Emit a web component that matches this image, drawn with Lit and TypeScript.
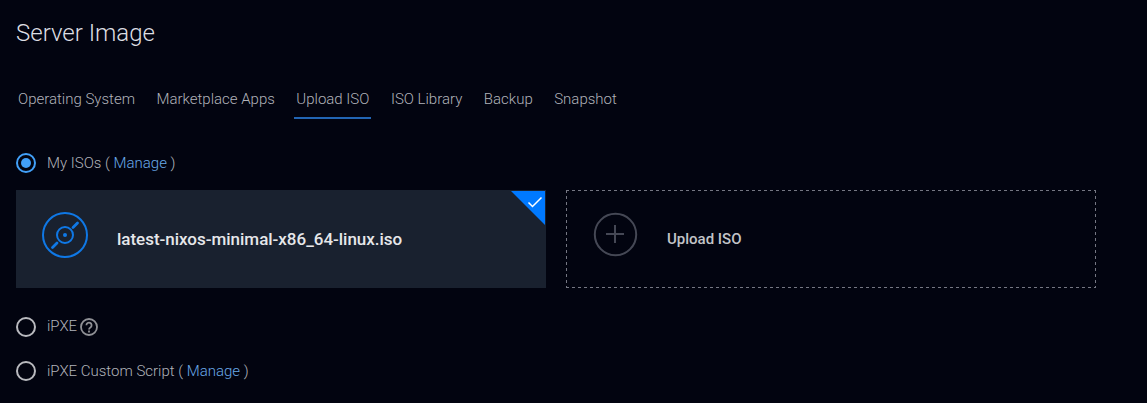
import { LitElement, html, css } from "lit";
import { customElement, property } from "lit/decorators.js";

@customElement("radio-dot")
class RadioDot extends LitElement {
  @property({ type: Boolean }) checked = false;
  static styles = css`
    :host { display: block; width: 20px; height: 20px; flex: none; }
    svg { display: block; }
    .on { stroke: #42a0f8; }
    .off { stroke: #b9babf; }
    .dot { fill: #42a0f8; }
  `;
  render() {
    return html`<svg width="20" height="20" viewBox="0 0 20 20" fill="none">
      <circle class=${this.checked ? "on" : "off"} cx="10" cy="10" r="9" stroke-width="2" />
      <circle class=${this.checked ? "dot" : ""} cx="10" cy="10" r="5" />
    </svg>`;
  }
}

@customElement("app-root")
class AppRoot extends LitElement {
  static styles = css`
    :host {
      display: block;
      box-sizing: border-box;
      height: 403px;
      padding: 18px 51px 0 16px;
      overflow: hidden;
      background: #020410;
      color: #b1b3ba;
      font: 300 15px/20px Roboto, "Liberation Sans", sans-serif;
    }
    h1 { margin: 0; height: 30px; font-size: 24px; line-height: 30px; font-weight: 300; color: #dddee3; }
    .tabs { display: flex; gap: 17.5px; margin-top: 41px; }
    .tab { height: 28px; padding: 0 2px; white-space: nowrap; border-bottom: 2px solid transparent; }
    .tab.active { border-color: #2265b4; }
    .row { display: flex; align-items: center; gap: 11px; height: 20px; white-space: nowrap; }
    .mine { margin-top: 34px; }
    .ipxe { margin-top: 29px; }
    .script { margin-top: 24px; }
    .label { display: flex; align-items: flex-start; gap: 3px; height: 22px; }
    .label svg { margin-top: 2px; }
    .link { color: #69a9e8; }
    .cards { display: grid; grid-template-columns: 1fr 1fr; gap: 20px; margin-top: 17px; }
    .card { position: relative; box-sizing: border-box; height: 98px; display: flex; }
    .iso { background: #19212f; padding: 22px 0 0 26px; gap: 29px; }
    .upload {
      --across: repeating-linear-gradient(90deg, #757783 0 3px, transparent 3px 6px);
      --down: repeating-linear-gradient(180deg, #757783 0 3px, transparent 3px 6px);
      background:
        var(--across) 0 0 / 100% 1px no-repeat,
        var(--across) 0 100% / 100% 1px no-repeat,
        var(--down) 0 0 / 1px 100% no-repeat,
        var(--down) 100% 0 / 1px 100% no-repeat;
      padding: 22px 0 0 27px;
      gap: 29px;
    }
    .name { padding-top: 17px; font-size: 17px; font-weight: 500; color: #e6e7ea; }
    .iso .name { letter-spacing: -0.02px; }
    .upload .name { font-size: 15px; color: #c3c4c8; }
    .corner { position: absolute; top: 1px; right: 1px; }
    svg { display: block; flex: none; }
  `;
  tabs = ["Operating System", "Marketplace Apps", "Upload ISO", "ISO Library", "Backup", "Snapshot"];
  render() {
    return html`
      <h1>Server Image</h1>
      <nav class="tabs">
        ${this.tabs.map((t) => html`<div class="tab ${t === "Upload ISO" ? "active" : ""}">${t}</div>`)}
      </nav>
      <div class="row mine">
        <radio-dot checked></radio-dot>
        <span>My ISOs ( <span class="link">Manage</span> )</span>
      </div>
      <div class="cards">
        <div class="card iso">
          <svg width="46" height="46" viewBox="0 0 46 46" fill="none" stroke="#0f78e6" stroke-width="2">
            <circle cx="23" cy="23" r="22" />
            <circle cx="23" cy="23" r="8" />
            <circle cx="23" cy="23" r="2" fill="#0f78e6" stroke="none" />
            <path d="M31 15.5L35.5 11M10.5 35.5L15 31" stroke-width="2.8" stroke-linecap="round" />
          </svg>
          <div class="name">latest-nixos-minimal-x86_64-linux.iso</div>
          <svg class="corner" width="34" height="34" viewBox="0 0 34 34" fill="none">
            <path d="M0 0H34V34Z" fill="#0079ff" />
            <path d="M17.5 11.5L21.5 15.5L30.5 6.5" stroke="#fff" stroke-width="1.5" />
          </svg>
        </div>
        <div class="card upload">
          <svg width="45" height="45" viewBox="0 0 45 45" fill="none" stroke="#454855" stroke-width="2">
            <circle cx="22.5" cy="22.5" r="20.7" />
            <path d="M22 13V31M13 22H31" />
          </svg>
          <div class="name">Upload ISO</div>
        </div>
      </div>
      <div class="row ipxe">
        <radio-dot></radio-dot>
        <span class="label">
          <span>iPXE</span>
          <svg width="18" height="18" viewBox="0 0 18 18" fill="none" stroke="#909196" stroke-width="1.8">
            <circle cx="9" cy="9" r="8" />
            <path d="M6.4 7.2a2.6 2.6 0 1 1 4.3 2C9.6 9.9 9 10.3 9 11.6M9 12.6v1.8" />
          </svg>
        </span>
      </div>
      <div class="row script">
        <radio-dot></radio-dot>
        <span>iPXE Custom Script ( <span class="link">Manage</span> )</span>
      </div>
    `;
  }
}
